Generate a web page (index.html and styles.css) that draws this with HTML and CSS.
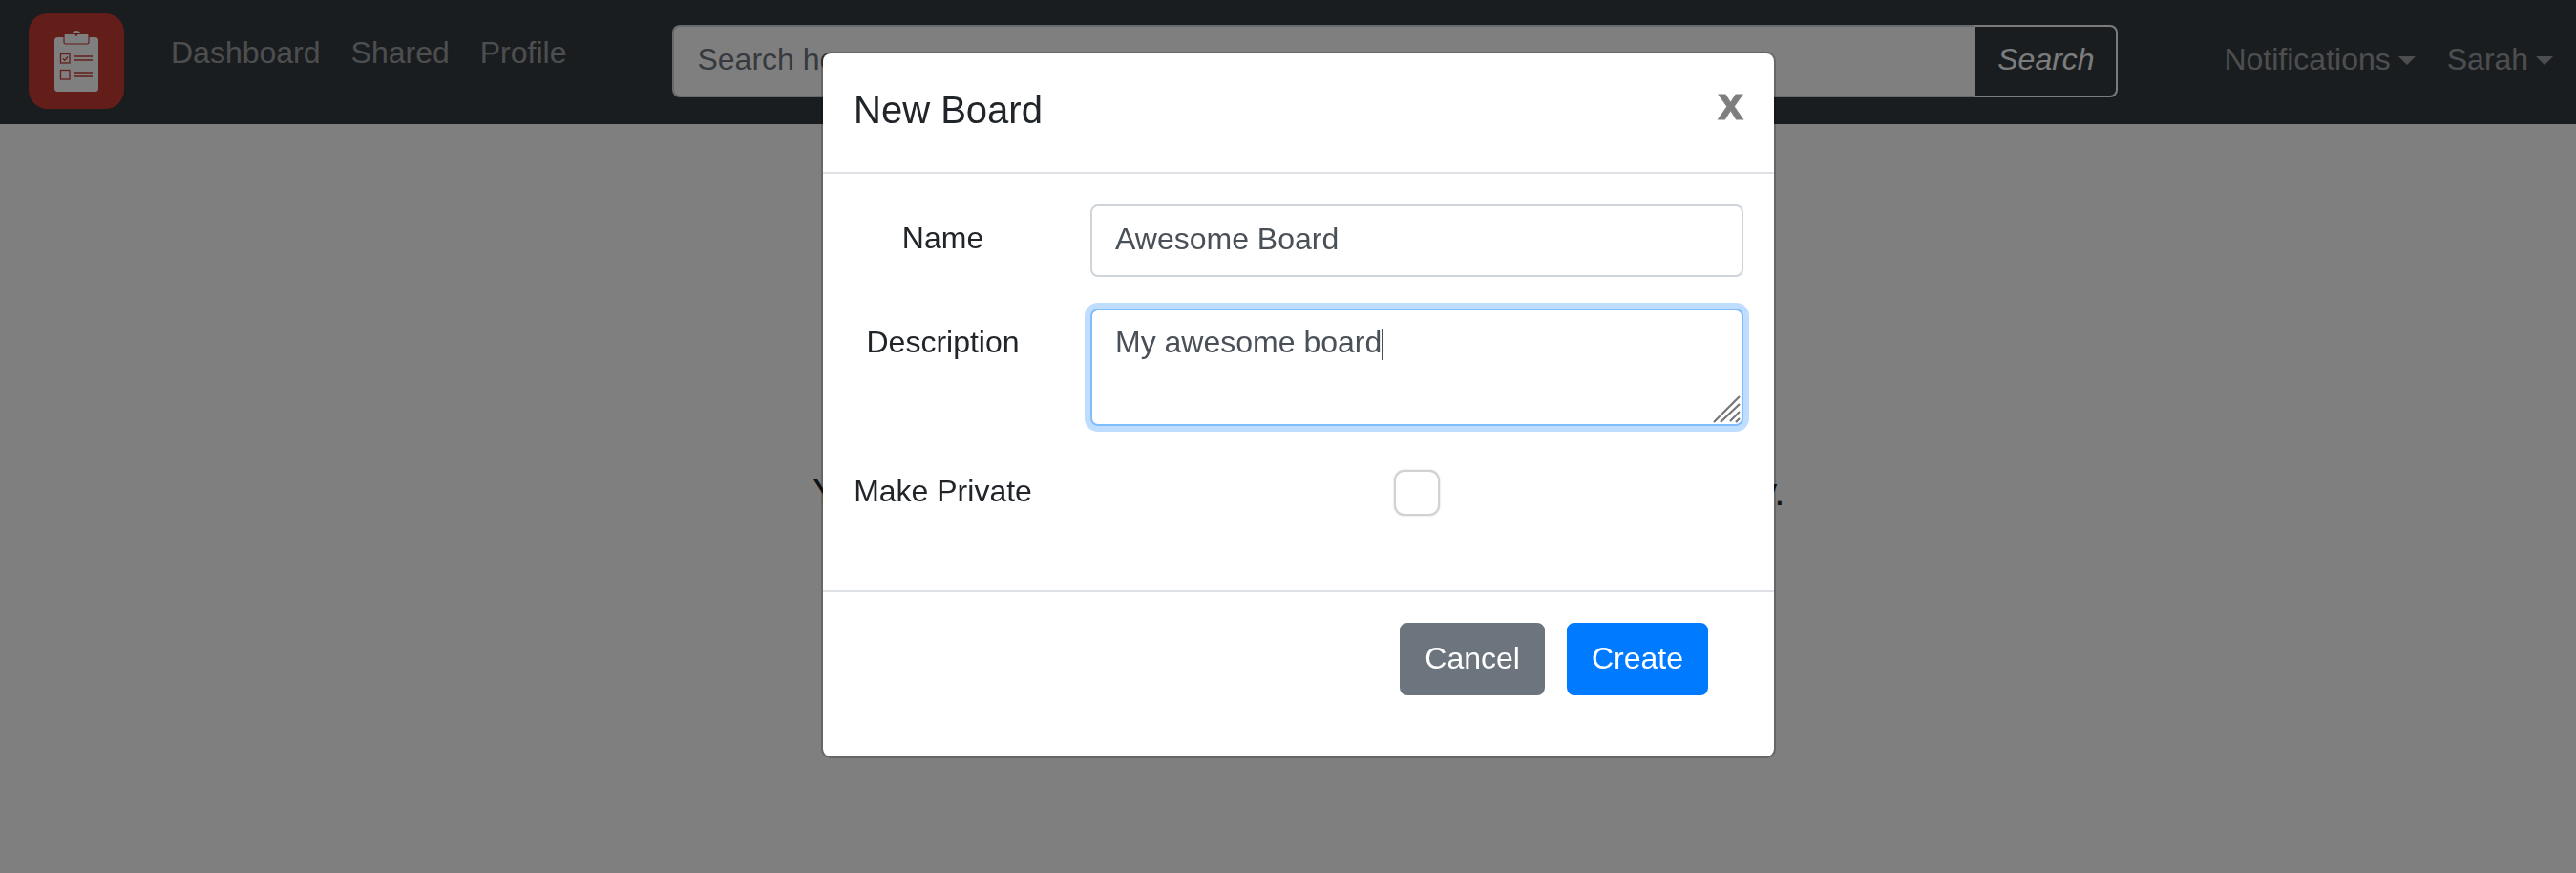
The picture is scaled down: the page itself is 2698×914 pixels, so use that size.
FILE: index.html
```html
<!DOCTYPE html>
<html lang="en">
<head>
    <meta charset="UTF-8">
    <meta name="viewport" content="width=device-width, initial-scale=1.0">
    <title>Boards</title>
    <link rel="stylesheet" href="styles.css">
</head>
<body>
    <nav class="navbar">
        <a class="brand" href="#">
            <svg class="brand-icon" viewBox="0 0 100 100">
                <rect class="logo-bg" width="100" height="100" rx="20"/>
                <rect class="logo-paper" x="27" y="25" width="46" height="57" rx="3.5"/>
                <circle class="logo-paper" cx="50" cy="22" r="4"/>
                <rect class="logo-clip" x="37" y="21.5" width="26" height="10.5" rx="1.5"/>
                <circle class="logo-dot" cx="50" cy="22.5" r="1.3"/>
                <rect class="logo-line" x="33.5" y="42.5" width="9.5" height="9.5"/>
                <rect class="logo-line" x="33.5" y="59.5" width="9.5" height="9.5"/>
                <path class="logo-line" d="M36 47.5l1.8 1.8 3.2-3.8M47 45h20M47 49h20M47 62h20M47 66h20"/>
            </svg>
        </a>
        <ul class="nav-links">
            <li><a href="#">Dashboard</a></li>
            <li><a href="#">Shared</a></li>
            <li><a href="#">Profile</a></li>
        </ul>
        <form class="search-form">
            <input class="search-input" type="text" placeholder="Search here...">
            <button class="search-btn" type="button">Search</button>
        </form>
        <ul class="nav-menus">
            <li><a class="dropdown" href="#">Notifications</a></li>
            <li><a class="dropdown" href="#">Sarah</a></li>
        </ul>
    </nav>

    <main class="content">
        <p class="empty-text">You do not have any boards yet. Create a new one today.</p>
    </main>

    <div class="backdrop">
        <div class="modal">
            <div class="modal-header">
                <h5 class="modal-title">New Board</h5>
                <button class="close" type="button">x</button>
            </div>
            <form class="modal-body">
                <label class="form-label" for="name">Name</label>
                <input class="form-control" id="name" type="text" value="Awesome Board">

                <label class="form-label" for="description">Description</label>
                <div class="textarea-wrap">
                    <textarea class="form-control focused" id="description">My awesome board</textarea>
                    <span class="text-caret"></span>
                    <svg class="grip" viewBox="0 0 30 30">
                        <path d="M1 28L28 1M8 28L28 9M18 27L28 17M24 28l4-4"/>
                    </svg>
                </div>

                <label class="form-label label-check" for="private">Make Private</label>
                <div class="check-cell">
                    <input class="checkbox" id="private" type="checkbox">
                </div>
            </form>
            <div class="modal-footer">
                <button class="btn btn-secondary" type="button">Cancel</button>
                <button class="btn btn-primary" type="button">Create</button>
            </div>
        </div>
    </div>
</body>
</html>
```

FILE: styles.css
```css
* {
    box-sizing: border-box;
}

body {
    font-family: 'Liberation Sans', Arial, sans-serif;
    font-size: 32px;
    line-height: 48px;
    color: #212529;
    background-color: #fff;
    margin: 0;
    height: 914px;
    overflow: hidden;
}

a {
    text-decoration: none;
    color: inherit;
}

ul {
    list-style: none;
    margin: 0;
    padding: 0;
}

.navbar {
    display: flex;
    align-items: flex-start;
    height: 130px;
    background-color: #343a40;
    color: rgba(255, 255, 255, 0.5);
}

.brand {
    margin: 14px 0 0 30px;
    height: 100px;
}

.brand-icon {
    display: block;
    width: 100px;
    height: 100px;
}

.logo-bg {
    fill: #c83c34;
}

.logo-paper {
    fill: #fff;
}

.logo-clip {
    fill: #fff;
    stroke: #c83c34;
    stroke-width: 1.2;
}

.logo-dot {
    fill: #c83c34;
}

.logo-line {
    fill: none;
    stroke: #c83c34;
    stroke-width: 1.3;
}

.nav-links {
    display: flex;
    gap: 32px;
    margin: 31px 0 0 49px;
}

.search-form {
    display: flex;
    width: 1514px;
    height: 76px;
    margin: 26px 0 0 111px;
}

.search-input {
    flex: 1;
    min-width: 0;
    font: inherit;
    color: #495057;
    background-color: #fff;
    border: 2px solid #ced4da;
    border-right: none;
    border-radius: 8px 0 0 8px;
    padding: 0 24px 4px;
}

.search-input::placeholder {
    color: #6c757d;
    opacity: 1;
}

.search-btn {
    width: 151px;
    font: italic 32px 'Liberation Sans', Arial, sans-serif;
    color: #f8f9fa;
    background: transparent;
    border: 2px solid #f8f9fa;
    border-radius: 0 8px 8px 0;
    padding: 0 0 4px;
}

.nav-menus {
    display: flex;
    gap: 33px;
    margin: 38px 0 0 111px;
}

.dropdown {
    display: flex;
    align-items: center;
}

.dropdown::after {
    content: "";
    margin: 2px 0 0 8px;
    border-top: 9px solid;
    border-left: 9px solid transparent;
    border-right: 9px solid transparent;
}

.content {
    margin-top: 355px;
    padding-left: 22px;
    text-align: center;
}

.empty-text {
    margin: 0;
    font-size: 40px;
    line-height: 60px;
    letter-spacing: 0.05px;
}

.backdrop {
    position: fixed;
    top: 0;
    left: 0;
    right: 0;
    bottom: 0;
    display: flex;
    justify-content: center;
    align-items: flex-start;
    padding: 54px 0 0 22px;
    background-color: rgba(0, 0, 0, 0.5);
}

.modal {
    width: 1000px;
    height: 740px;
    background-color: #fff;
    border: 2px solid rgba(0, 0, 0, 0.2);
    border-radius: 10px;
    background-clip: padding-box;
}

.modal-header {
    display: flex;
    justify-content: space-between;
    align-items: flex-start;
    height: 126px;
    padding: 29px 32px 0;
    border-bottom: 2px solid #dee2e6;
}

.modal-title {
    margin: 0;
    font-size: 40px;
    font-weight: 400;
    line-height: 60px;
}

.close {
    font: bold 48px/48px 'Liberation Sans', Arial, sans-serif;
    color: #000;
    opacity: 0.5;
    background: none;
    border: none;
    padding: 0;
    -webkit-text-stroke: 1px #000;
}

.modal-body {
    display: grid;
    grid-template-columns: 187px 1fr;
    column-gap: 61px;
    row-gap: 33px;
    align-items: start;
    align-content: start;
    height: 436px;
    padding: 32px 32px 0;
}

.form-label {
    text-align: center;
    padding-top: 11px;
}

.label-check {
    padding-top: 0;
}

.form-control {
    display: block;
    width: 100%;
    height: 76px;
    font: inherit;
    color: #495057;
    background-color: #fff;
    border: 2px solid #ced4da;
    border-radius: 8px;
    padding: 6px 24px 10px;
    outline: none;
}

textarea.form-control {
    height: 123px;
    padding: 9px 24px;
    resize: none;
    overflow: hidden;
}

.focused {
    border-color: #80bdff;
    box-shadow: 0 0 0 6px rgba(0, 123, 255, 0.25);
}

.textarea-wrap {
    position: relative;
    margin-bottom: 11px;
}

.text-caret {
    position: absolute;
    left: 305px;
    top: 21px;
    width: 2px;
    height: 33px;
    background-color: #495057;
}

.grip {
    position: absolute;
    right: 2px;
    bottom: 2px;
    width: 30px;
    height: 30px;
}

.grip path {
    fill: none;
    stroke: #757575;
    stroke-width: 2.2;
}

.check-cell {
    display: flex;
    justify-content: center;
}

.checkbox {
    appearance: none;
    width: 48px;
    height: 48px;
    margin: 2px 0 0;
    background-color: #fff;
    border: 2px solid #d2d2d2;
    border-radius: 11px;
    box-shadow: 0 0 2px rgba(0, 0, 0, 0.2);
}

.modal-footer {
    display: flex;
    justify-content: flex-end;
    gap: 23px;
    padding: 32px 69px 0 0;
    border-top: 2px solid #dee2e6;
}

.btn {
    height: 76px;
    font: inherit;
    color: #fff;
    border: 2px solid transparent;
    border-radius: 8px;
    padding: 0 24px 3px;
}

.btn-secondary {
    background-color: #6c757d;
    border-color: #6c757d;
}

.btn-primary {
    background-color: #007bff;
    border-color: #007bff;
}
```
